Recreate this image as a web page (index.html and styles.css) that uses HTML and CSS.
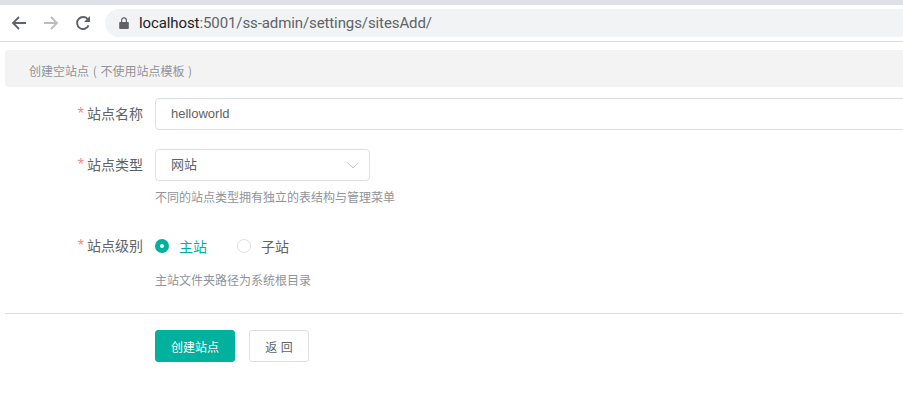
FILE: index.html
```html
<!DOCTYPE html>
<html lang="zh-CN">
<head>
    <meta charset="UTF-8">
    <title>创建站点</title>
    <link rel="stylesheet" href="styles.css">
</head>
<body>
    <div class="tab-strip"></div>
    <div class="toolbar">
        <svg class="nav-icon" viewBox="0 0 16 16"><path d="M15 8H2M8 2L2 8l6 6" fill="none" stroke="#5f6368" stroke-width="1.8"/></svg>
        <svg class="nav-icon" viewBox="0 0 16 16"><path d="M1 8h13M8 2l6 6-6 6" fill="none" stroke="#babcbe" stroke-width="1.8"/></svg>
        <svg class="nav-icon" viewBox="0 0 16 16"><path d="M13.600 10.400A6 6 0 1 1 13 4.500" fill="none" stroke="#5f6368" stroke-width="1.900"/><path d="M15 1v6H9z" fill="#5f6368"/></svg>
        <div class="address">
            <svg class="lock" viewBox="0 0 10 12"><path d="M1 5h8a.8.8 0 0 1 .8.8v5.400a.8.8 0 0 1-.8.8H1a.8.8 0 0 1-.8-.8V5.800A.8.8 0 0 1 1 5z" fill="#5f6368"/><path d="M2.600 5V3.200a2.400 2.400 0 0 1 4.800 0V5" fill="none" stroke="#5f6368" stroke-width="1.200"/></svg>
            <span class="host">localhost</span><span class="url-rest">:5001/ss-admin/settings/sitesAdd/</span>
        </div>
    </div>

    <div class="page">
        <div class="panel-title">创建空站点 ( 不使用站点模板 )</div>

        <div class="form-row row-name">
            <label class="form-label"><span class="req">*</span>站点名称</label>
            <div class="form-field">
                <div class="input">helloworld</div>
            </div>
        </div>

        <div class="form-row row-type">
            <label class="form-label"><span class="req">*</span>站点类型</label>
            <div class="form-field">
                <div class="input select">
                    网站
                    <svg class="caret" viewBox="0 0 12 7"><path d="M.5.7L6 6l5.500-5.300" fill="none" stroke="#c0c4cc" stroke-width="1"/></svg>
                </div>
                <div class="help">不同的站点类型拥有独立的表结构与管理菜单</div>
            </div>
        </div>

        <div class="form-row row-level">
            <label class="form-label"><span class="req">*</span>站点级别</label>
            <div class="form-field">
                <div class="radios">
                    <span class="radio checked"><i class="radio-dot"></i>主站</span>
                    <span class="radio"><i class="radio-dot"></i>子站</span>
                </div>
                <div class="help help-level">主站文件夹路径为系统根目录</div>
            </div>
        </div>

        <hr class="divider">

        <div class="actions">
            <button type="button" class="btn btn-primary">创建站点</button>
            <button type="button" class="btn btn-back">返 回</button>
        </div>
    </div>
</body>
</html>
```

FILE: styles.css
```css
html, body {
    margin: 0;
    height: 412px;
    overflow: hidden;
    background: #fff;
    font-family: "Noto Sans CJK SC", "Noto Sans", sans-serif;
    font-size: 14px;
    color: #606266;
}
.tab-strip {
    height: 5px;
    background: #dee1e6;
}
.toolbar {
    height: 36px;
    display: flex;
    align-items: center;
    border-bottom: 1px solid #dcdcdc;
    padding-left: 11px;
}
.nav-icon {
    width: 16px;
    height: 16px;
    margin-right: 16px;
    flex: none;
}
.address {
    flex: 1;
    height: 28px;
    margin-left: -2px;
    padding-left: 14px;
    display: flex;
    align-items: center;
    background: #f1f3f4;
    border-radius: 14px 0 0 14px;
    font-family: Roboto, "Liberation Sans", sans-serif;
    font-size: 15px;
    letter-spacing: -0.1px;
    white-space: nowrap;
}
.lock {
    width: 10px;
    height: 12px;
    margin-right: 10px;
}
.host {
    color: #202124;
}
.url-rest {
    color: #5f6368;
}
.page {
    padding: 8px 0 0 5px;
}
.panel-title {
    height: 37px;
    box-sizing: border-box;
    padding: 12px 0 0 24px;
    background: #f3f3f3;
    border-radius: 4px 0 0 4px;
    font-size: 12px;
    line-height: 18px;
    word-spacing: 1px;
    color: #909399;
}
.form-row {
    display: flex;
    align-items: flex-start;
}
.row-name {
    margin-top: 11px;
    margin-right: -20px;
}
.row-type {
    margin-top: 19px;
}
.row-level {
    margin-top: 24px;
}
.form-label {
    width: 138px;
    flex: none;
    box-sizing: border-box;
    text-align: right;
    line-height: 30px;
    color: #606266;
}
.req {
    font-family: "Liberation Sans", sans-serif;
    font-size: 16px;
    color: #f78989;
    margin-right: 3px;
}
.form-field {
    flex: 1;
    padding-left: 12px;
}
.input {
    height: 32px;
    box-sizing: border-box;
    padding: 0 15px;
    border: 1px solid #dcdfe6;
    border-radius: 4px;
    font-family: "Liberation Sans", "Noto Sans CJK SC", sans-serif;
    font-size: 13px;
    line-height: 30px;
    color: #606266;
}
.select {
    position: relative;
    width: 215px;
}
.caret {
    position: absolute;
    right: 10px;
    top: 12px;
    width: 12px;
    height: 7px;
}
.help {
    margin-top: 7px;
    font-size: 12px;
    line-height: 18px;
    color: #909399;
}
.help-level {
    margin-top: 9px;
}
.radios {
    display: flex;
    gap: 30px;
    height: 32px;
    align-items: center;
}
.radio {
    display: flex;
    align-items: center;
    color: #606266;
}
.radio-dot {
    width: 14px;
    height: 14px;
    box-sizing: border-box;
    margin-right: 10px;
    border: 1px solid #dcdfe6;
    border-radius: 50%;
    background: #fff;
}
.radio.checked {
    color: #00b19d;
}
.radio.checked .radio-dot {
    border: 5px solid #00b19d;
}
.divider {
    margin: 24px 0 16px;
    border: 0;
    border-top: 1px solid #dcdfe6;
}
.actions {
    display: flex;
    gap: 14px;
    padding-left: 150px;
}
.btn {
    width: 60px;
    height: 32px;
    padding: 0;
    border: 1px solid #dcdfe6;
    border-radius: 3px;
    background: #fff;
    font-family: "Noto Sans CJK SC", sans-serif;
    font-size: 12px;
    color: #606266;
}
.btn-back {
    word-spacing: 1px;
}
.btn-primary {
    width: 80px;
    border-color: #00b19d;
    background: #00b19d;
    color: #fff;
}
```
